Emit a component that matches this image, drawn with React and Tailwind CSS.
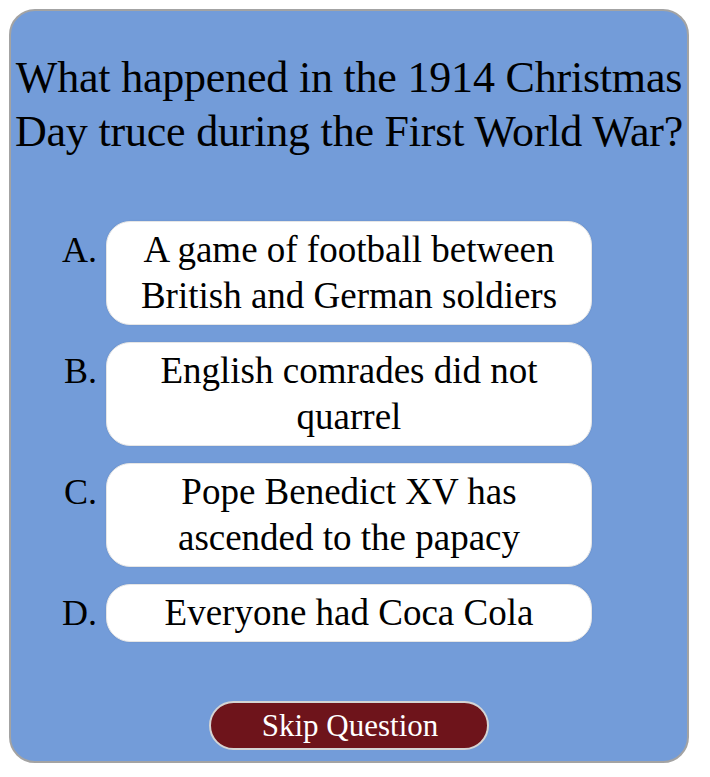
export default function App() {
  const options = [
    { label: "A.", text: ["A game of football between", "British and German soldiers"] },
    { label: "B.", text: ["English comrades did not", "quarrel"] },
    { label: "C.", text: ["Pope Benedict XV has", "ascended to the papacy"] },
    { label: "D.", text: ["Everyone had Coca Cola"] },
  ];
  return (
    <div className="w-[710px] h-[777px] bg-white pt-[9px] pl-[9px]" style={{ fontFamily: '"Liberation Serif", "Times New Roman", serif' }}>
      <div className="w-[680px] h-[754px] rounded-[26px] border-2 border-[#a3a3a3] bg-[#739cd9] flex flex-col items-stretch text-black">
        <h1 className="mt-[40px] text-center text-[44px] leading-[54px] font-normal tracking-[-0.2px] whitespace-nowrap">
          What happened in the 1914 Christmas<br />Day truce during the First World War?
        </h1>
        <div className="mt-[62px] flex flex-col gap-[17px]">
          {options.map((o) => (
            <div key={o.label} className="grid grid-cols-[1fr_486px_1fr] items-start">
              <div className="justify-self-end pr-[9px] pt-[6px] text-[36px] leading-[46px]">{o.label}</div>
              <div className="rounded-[24px] border border-[#e6e6e6] bg-white py-[5px] text-center text-[37px] leading-[46px] whitespace-nowrap shadow-[0_0_2px_rgba(0,0,0,0.08)]">
                {o.text.map((t, i) => (
                  <div key={i}>{t}</div>
                ))}
              </div>
              <div />
            </div>
          ))}
        </div>
        <div className="mt-[59px] flex justify-center">
          <button className="w-[280px] h-[49px] rounded-full border-2 border-[#d4d4d4] bg-[#6e141b] text-white text-[31px] leading-[40px] pl-[2px]">
            Skip Question
          </button>
        </div>
      </div>
    </div>
  );
}
